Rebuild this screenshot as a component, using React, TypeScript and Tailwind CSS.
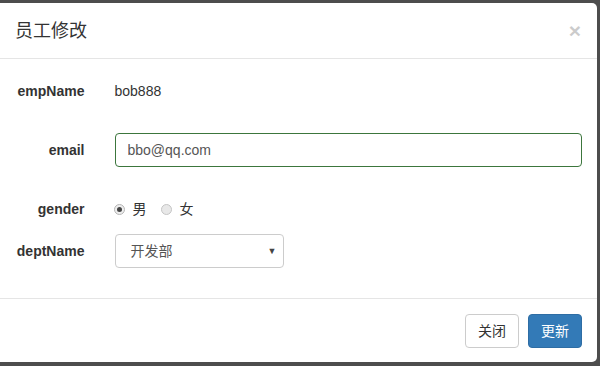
import React from "react";

const font = {
  fontFamily:
    '"Liberation Sans", Arial, "Noto Sans CJK SC", sans-serif',
};

export default function App() {
  return (
    <div
      className="w-[600px] h-[366px] bg-[#4d4d4d] pt-[3px] overflow-hidden text-[14px] text-[#333] leading-[20px]"
      style={font}
    >
      <div className="w-[597px] h-[359px] bg-white rounded-r-[5px] flex flex-col">
        {/* header */}
        <div className="flex items-start justify-between px-[15px] pt-[15px] pb-[14px] border-b border-[#e5e5e5]">
          <h4 className="text-[18px] leading-[26px] text-[#333]">员工修改</h4>
          <button className="text-[21px] font-bold leading-[21px] text-black opacity-20 mt-[2px] mr-[1px]">
            ×
          </button>
        </div>

        {/* body */}
        <div className="p-[15px]">
          <div className="grid grid-cols-[99.5px_1fr] -mx-[15px]">
            {/* empName */}
            <label className="text-right font-bold pt-[7px] pr-[15px] pl-[15px]">empName</label>
            <div className="px-[15px]">
              <p className="pt-[7px] pb-[7px] min-h-[34px] mb-[10px]">bob888</p>
            </div>
            <div className="col-span-2 h-[15px]" />

            {/* email */}
            <label className="text-right font-bold pt-[7px] pr-[15px] pl-[15px]">email</label>
            <div className="px-[15px]">
              <input
                className="w-full h-[34px] px-[12px] py-[6px] border border-[#3c763d] rounded-[4px] text-[#555] outline-none"
                defaultValue="bbo@qq.com"
                style={font}
              />
              <div className="h-[10px]" />
            </div>
            <div className="col-span-2 h-[15px]" />

            {/* gender */}
            <label className="text-right font-bold pt-[7px] pr-[15px] pl-[15px]">gender</label>
            <div className="px-[15px] pt-[7px] min-h-[27px] flex items-start">
              <span className="flex items-center">
                <span className="w-[11px] h-[11px] rounded-full border border-[#b5b5b5] bg-[#eee] flex items-center justify-center mt-[1px] -ml-[1px]">
                  <span className="w-[5px] h-[5px] rounded-full bg-[#444]" />
                </span>
                <span className="ml-[8px]">男</span>
              </span>
              <span className="flex items-center ml-[14px]">
                <span className="w-[11px] h-[11px] rounded-full border border-[#c5c5c5] bg-[#e8e8e8] mt-[1px]" />
                <span className="ml-[8px]">女</span>
              </span>
            </div>
            <div className="col-span-2 h-[15px]" />

            {/* deptName */}
            <label className="text-right font-bold pt-[7px] pr-[15px] pl-[15px]">deptName</label>
            <div className="px-[15px]">
              <div className="w-[169px] h-[34px] border border-[#ccc] rounded-[4px] flex items-center justify-between pl-[15px] pr-[6px] text-[#555]">
                <span>开发部</span>
                <span className="text-[9px] text-[#444]">▼</span>
              </div>
            </div>
            <div className="col-span-2 h-[15px]" />
          </div>
        </div>

        {/* footer */}
        <div className="border-t border-[#e5e5e5] p-[15px] flex justify-end gap-[9px]">
          <button className="h-[34px] px-[12px] border border-[#ccc] rounded-[4px] bg-white text-[#333]">
            关闭
          </button>
          <button className="h-[34px] px-[12px] border border-[#2e6da4] rounded-[4px] bg-[#337ab7] text-white">
            更新
          </button>
        </div>
      </div>
    </div>
  );
}
